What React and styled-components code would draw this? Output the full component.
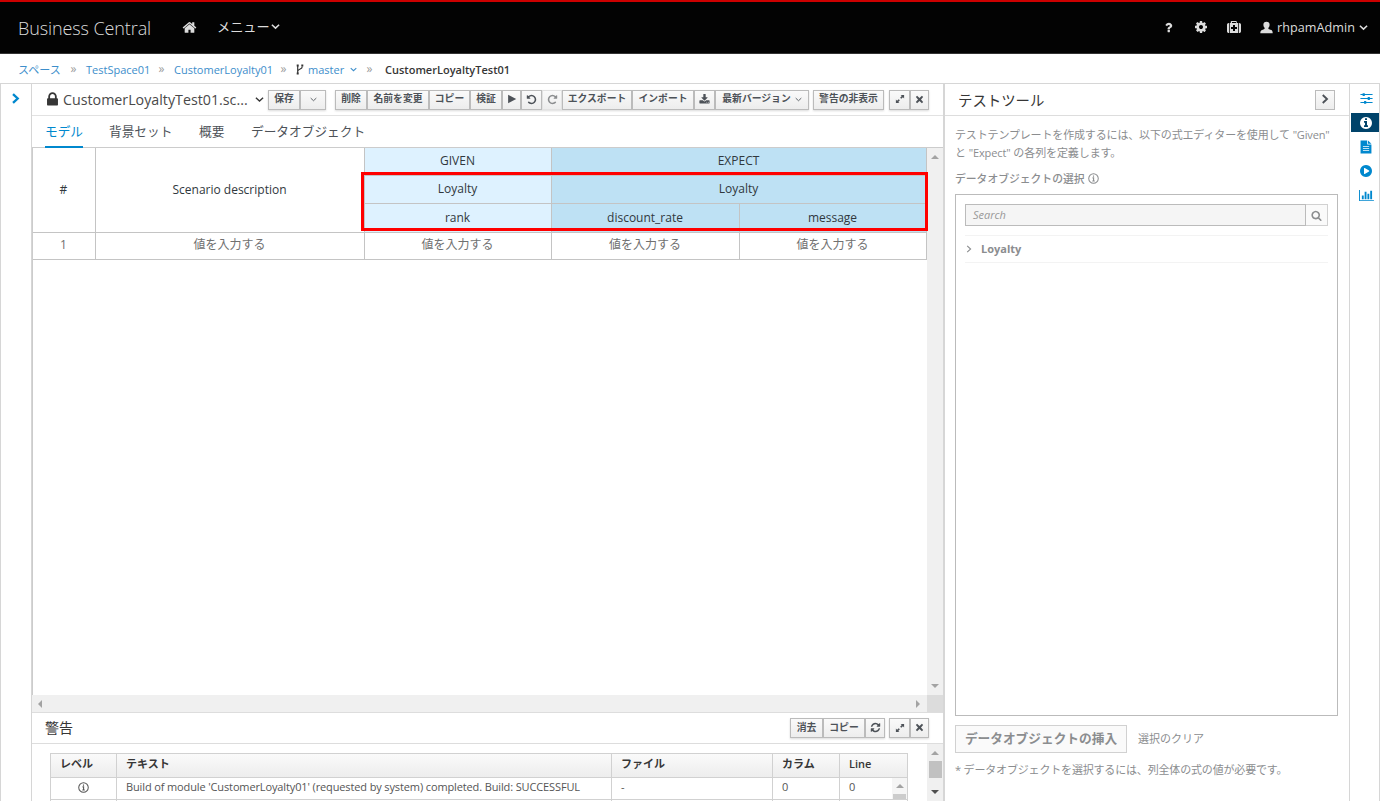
import React from 'react';
import styled, { createGlobalStyle } from "styled-components";

const paths = {
    home: "M1472 992v480q0 26-19 45t-45 19h-384v-384h-256v384h-384q-26 0-45-19t-19-45v-480q0-1 .5-3t.5-3l575-474 575 474q1 2 1 6zm223-69l-62 74q-8 9-21 11h-3q-13 0-21-7l-692-577-692 577q-12 8-24 7-13-2-21-11l-62-74q-8-10-7-23.5t11-21.5l719-599q32-26 76-26t76 26l244 204v-195q0-14 9-23t23-9h192q14 0 23 9t9 23v408l219 182q10 8 11 21.5t-7 23.5z",
    question: "M1088 1256v240q0 16-12 28t-28 12h-240q-16 0-28-12t-12-28v-240q0-16 12-28t28-12h240q16 0 28 12t12 28zm316-600q0 54-15.5 101t-35 76.5-55 59.5-57.5 43.5-61 35.5q-41 23-68.5 65t-27.5 67q0 17-12 32.5t-28 15.5h-240q-15 0-25.5-18.5t-10.5-37.5v-45q0-83 65-156.5t143-108.5q59-27 84-56t25-76q0-42-46.5-74t-107.5-32q-65 0-108 29-35 25-107 115-13 16-31 16-12 0-25-8l-164-125q-13-10-15.5-25t5.5-28q160-266 464-266 80 0 161 31t146 83 106 127.5 41 158.5z",
    cog: "M1152 896q0-106-75-181t-181-75-181 75-75 181 75 181 181 75 181-75 75-181zm512-109v222q0 12-8 23t-20 13l-185 28q-19 54-39 91 35 50 107 138 10 12 10 25t-9 23q-27 37-99 108t-94 71q-12 0-26-9l-138-108q-44 23-91 38-16 136-29 186-7 28-36 28h-222q-14 0-24.5-8.5t-11.5-21.5l-28-184q-49-16-90-37l-141 107q-10 9-25 9-14 0-25-11-126-114-165-168-7-10-7-23 0-12 8-23 15-21 51-66.5t54-70.5q-27-50-41-99l-183-27q-13-2-21-12.5t-8-23.5v-222q0-12 8-23t19-13l186-28q14-46 39-92-40-57-107-138-10-12-10-24 0-10 9-23 26-36 98.5-107.5t94.5-71.5q13 0 26 10l138 107q44-23 91-38 16-136 29-186 7-28 36-28h222q14 0 24.5 8.5t11.5 21.5l28 184q49 16 90 37l142-107q9-9 24-9 13 0 25 10 129 119 165 170 7 8 7 22 0 12-8 23-15 21-51 66.5t-54 70.5q26 50 41 98l183 28q13 2 21 12.5t8 23.5z",
    medkit: "M1280 1120v-192q0-14-9-23t-23-9h-224v-224q0-14-9-23t-23-9h-192q-14 0-23 9t-9 23v224h-224q-14 0-23 9t-9 23v192q0 14 9 23t23 9h224v224q0 14 9 23t23 9h192q14 0 23-9t9-23v-224h224q14 0 23-9t9-23zm-640-736h512v-128h-512v128zm-384 0v1280h-32q-92 0-158-66t-66-158v-832q0-92 66-158t158-66h32zm1184 0v1280h-1088v-1280h128v-160q0-40 28-68t68-28h576q40 0 68 28t28 68v160h128zm352 224v832q0 92-66 158t-158 66h-32v-1280h32q92 0 158 66t66 158z",
    user: "M896 96c-280 0-430 170-430 420 0 160 60 330 170 420v130c-40 110-460 140-550 330-40 90-40 180-40 300h1700c0-120 0-210-40-300-90-190-510-220-550-330v-130c110-90 170-260 170-420 0-250-150-420-430-420z",
    search: "M1216 832q0-185-131.5-316.5t-316.5-131.5-316.5 131.5-131.5 316.5 131.5 316.5 316.5 131.5 316.5-131.5 131.5-316.5zm512 832q0 52-38 90t-90 38q-54 0-90-38l-343-342q-179 124-399 124-143 0-273.5-55.5t-225-150-150-225-55.5-273.5 55.5-273.5 150-225 225-150 273.5-55.5 273.5 55.5 225 150 150 225 55.5 273.5q0 220-124 399l343 343q37 37 37 90z",
    info: "M1152 1376v-160q0-14-9-23t-23-9h-96v-512q0-14-9-23t-23-9h-320q-14 0-23 9t-9 23v160q0 14 9 23t23 9h96v320h-96q-14 0-23 9t-9 23v160q0 14 9 23t23 9h448q14 0 23-9t9-23zm-128-896v-160q0-14-9-23t-23-9h-192q-14 0-23 9t-9 23v160q0 14 9 23t23 9h192q14 0 23-9t9-23zm640 416q0 209-103 385.5t-279.5 279.5-385.5 103-385.5-103-279.5-279.5-103-385.5 103-385.5 279.5-279.5 385.5-103 385.5 103 279.5 279.5 103 385.5z",
    download: "M1344 1344q0-26-19-45t-45-19-45 19-19 45 19 45 45 19 45-19 19-45zm256 0q0-26-19-45t-45-19-45 19-19 45 19 45 45 19 45-19 19-45zm128-224v320q0 40-28 68t-68 28h-1472q-40 0-68-28t-28-68v-320q0-40 28-68t68-28h465l135 136q58 56 136 56t136-56l136-136h464q40 0 68 28t28 68zm-325-569q17 41-14 70l-448 448q-18 19-45 19t-45-19l-448-448q-31-29-14-70 17-39 59-39h256v-448q0-26 19-45t45-19h256q26 0 45 19t19 45v448h256q42 0 59 39z",
    lock: "M640 768h512v-192q0-106-75-181t-181-75-181 75-75 181v192zm832 96v576q0 40-28 68t-68 28h-960q-40 0-68-28t-28-68v-576q0-40 28-68t68-28h32v-192q0-184 132-316t316-132 316 132 132 316v192h32q40 0 68 28t28 68z",
    undo: "M1664 896q0 156-61 298t-164 245-245 164-298 61q-172 0-327-72.5t-264-204.5q-7-10-6.5-22.5t8.5-20.5l137-138q10-9 25-9 16 2 23 12 73 95 179 147t225 52q104 0 198.5-40.5t163.5-109.5 109.5-163.5 40.5-198.5-40.5-198.5-109.5-163.5-163.5-109.5-198.5-40.5q-98 0-188 35.5t-160 101.5l137 138q31 30 14 69-17 40-59 40h-448q-26 0-45-19t-19-45v-448q0-42 40-59 39-17 69 14l130 129q107-101 244.5-156.5t284.5-55.5q156 0 298 61t245 164 164 245 61 298z",
    refresh: "M1639 1056q0 5-1 7-64 268-268 434.5t-478 166.5q-146 0-282.5-55t-243.5-157l-129 129q-19 19-45 19t-45-19-19-45v-448q0-26 19-45t45-19h448q26 0 45 19t19 45-19 45l-137 137q71 66 161 102t187 36q134 0 250-65t186-179q11-17 53-117 8-23 30-23h192q13 0 22.5 9.5t9.5 22.5zm25-800v448q0 26-19 45t-45 19h-448q-26 0-45-19t-19-45 19-45l138-138q-148-137-349-137-134 0-250 65t-186 179q-11 17-53 117-8 23-30 23h-199q-13 0-22.5-9.5t-9.5-22.5v-7q65-268 270-434.5t480-166.5q146 0 284 55.5t245 156.5l130-129q19-19 45-19t45 19 19 45z",
    playCircle: "M896 128q209 0 385.5 103t279.5 279.5 103 385.5-103 385.5-279.5 279.5-385.5 103-385.5-103-279.5-279.5-103-385.5 103-385.5 279.5-279.5 385.5-103zm384 823q32-18 32-55t-32-55l-544-320q-31-19-64-1-32 19-32 56v640q0 37 32 56 16 8 32 8 17 0 32-9z",
    play: "M200 130v1532l1450-766z",
    expand: "M1000 160h632v632l-210-210-290 290-212-212 290-290zM792 1632h-632v-632l210 210 290-290 212 212-290 290z",
    times: "M420 170l476 430 476-430 250 250-430 476 430 476-250 250-476-430-476 430-250-250 430-476-430-476z",
    file: "M200 60h850v520h540v1150h-1390zM1150 60l440 430h-440zM500 760v110h800v-110zM500 1020v110h800v-110zM500 1280v110h800v-110z",
    sliders: "M60 290h300v-130h300v130h1072v140h-1072v130h-300v-130h-300zM60 826h1000v-130h300v130h372v140h-372v130h-300v-130h-1000zM60 1362h500v-130h300v130h872v140h-872v130h-300v-130h-500z",
    chart: "M640 896v512h-256v-512h256zm384-512v1024h-256v-1024h256zm1024 1152v128h-2048v-1536h128v1408h1920zm-640-896v768h-256v-768h256zm384-384v1152h-256v-1152h256z",
}

const Icon = ({name, size = 12, width, flip}) => (
    <Svg width={width || size} height={size} $flip={flip} fill="currentColor" fillRule={name === 'file' ? 'evenodd' : 'nonzero'}
         viewBox={name === 'chart' ? "0 0 2048 1792" : "0 0 1792 1792"}>
        <path d={paths[name]}/>
    </Svg>
)

const Chevron = ({right, size = 8, weight = 1.4}) => (
    <Svg width={size} height={size} viewBox="0 0 8 8" fill="none" stroke="currentColor" strokeWidth={weight}>
        <path d={right ? "M2.2 .8L5.6 4L2.2 7.2" : "M.8 2.4L4 5.4L7.2 2.4"}/>
    </Svg>
)

const InfoOutline = ({size = 11}) => (
    <Svg width={size} height={size} viewBox="0 0 12 12" fill="none" stroke="currentColor">
        <circle cx="6" cy="6" r="5.2" strokeWidth="1.1"/>
        <path d="M6 2.7v1.3M4.9 5.3h1.2v3.4M4.7 8.8h2.7" strokeWidth="1.2"/>
    </Svg>
)

const Branch = () => (
    <Svg width="8" height="11" viewBox="0 0 8 11" fill="none" stroke="currentColor">
        <path d="M1.7 2v7M6.3 2.4c0 3.4-4.6 2.4-4.6 5" strokeWidth="1.2"/>
        <path d="M1.7 .6v2M1.7 8.4v2M6.3 .6v2" strokeWidth="2"/>
    </Svg>
)

const Arrow = ({dir, dark}) => (
    <Svg width="8" height="8" viewBox="0 0 8 8" fill={dark ? "#505050" : "#a3a3a3"}>
        <path d={{up: "M0 6l4-4 4 4z", down: "M0 2l4 4 4-4z", left: "M6 0L2 4l4 4z", right: "M2 0l4 4-4 4z"}[dir]}/>
    </Svg>
)

const toolbar = [
    [{w: 32, text: "保存"}, {w: 26, icon: <Chevron size={7} weight={1}/>}],
    [
        {w: 32, text: "削除"}, {w: 62, text: "名前を変更"}, {w: 41, text: "コピー"}, {w: 32, text: "検証"},
        {w: 19, icon: <Icon name="play" size={10}/>}, {w: 21, icon: <Icon name="undo" size={11}/>},
        {w: 20, icon: <Icon name="undo" flip size={11}/>, disabled: true},
        {w: 70, text: "エクスポート"}, {w: 62, text: "インポート"}, {w: 21, icon: <Icon name="download" size={11}/>},
        {w: 94, text: "最新バージョン", icon: <Chevron size={7} weight={1}/>},
    ],
    [{w: 71, text: "警告の非表示"}],
    [{w: 21, icon: <Icon name="expand" size={10}/>}, {w: 19, icon: <Icon name="times" size={9}/>}],
]
const gaps = [0, 9, 4, 5]

const alertTools = [
    [{w: 33, text: "消去"}, {w: 42, text: "コピー"}, {w: 20, icon: <Icon name="refresh" size={11}/>}],
    toolbar[3],
]

const Buttons = ({groups, spaces}) => groups.map((group, i) => (
    <Group key={i} $gap={spaces[i]}>
        {group.map((b, j) => (
            <Button key={j} $w={b.w} $disabled={b.disabled}>{b.text && <span>{b.text}</span>}{b.icon}</Button>
        ))}
    </Group>
))

const Header = () => (
    <TopBar>
        <Brand>Business Central</Brand>
        <HomeLink><Icon name="home" size={15}/></HomeLink>
        <MenuLink>メニュー<Chevron size={9}/></MenuLink>
        <Tools>
            <Icon name="question" size={13}/>
            <Icon name="cog" size={14}/>
            <Icon name="medkit" size={14}/>
            <UserMenu><Icon name="user" size={13}/><span>rhpamAdmin</span><Chevron size={9}/></UserMenu>
        </Tools>
    </TopBar>
)

const Breadcrumbs = () => (
    <Crumbs>
        <Crumb $w={43}>スペース</Crumb><Sep>»</Sep>
        <Crumb $w={63}>TestSpace01</Crumb><Sep>»</Sep>
        <Crumb $w={97}>CustomerLoyalty01</Crumb><Sep>»</Sep>
        <BranchIcon><Branch/></BranchIcon>
        <Crumb $w={49}>master<Chevron size={7} weight={1.2}/></Crumb><Sep>»</Sep>
        <Current>CustomerLoyaltyTest01</Current>
    </Crumbs>
)

const Grid = () => (
    <ScenarioGrid>
        <Cell $row="1 / 4">#</Cell>
        <Cell $row="1 / 4">Scenario description</Cell>
        <Cell $tone="given">GIVEN</Cell>
        <Cell $tone="expect" $col="4 / 6">EXPECT</Cell>
        <Cell $tone="given">Loyalty</Cell>
        <Cell $tone="expect" $col="4 / 6">Loyalty</Cell>
        <Cell $tone="given">rank</Cell>
        <Cell $tone="expect">discount_rate</Cell>
        <Cell $tone="expect">message</Cell>
        <Cell $muted>1</Cell>
        {[1, 2, 3, 4].map(n => <Cell key={n} $muted>値を入力する</Cell>)}
        <Highlight/>
    </ScenarioGrid>
)

const Alerts = () => (
    <AlertsWrapper>
        <AlertsHeader>
            <AlertsTitle>警告</AlertsTitle>
            <Buttons groups={alertTools} spaces={[0, 4]}/>
        </AlertsHeader>
        <AlertsBody>
            <AlertTable>
                <Th>レベル</Th><Th>テキスト</Th><Th>ファイル</Th><Th>カラム</Th><Th>Line</Th>
                <Td $center><InfoOutline/></Td>
                <Td>Build of module 'CustomerLoyalty01' (requested by system) completed. Build: SUCCESSFUL</Td>
                <Td>-</Td>
                <Td>0</Td>
                <Td $last>0<InnerScroll><Arrow dir="up"/><InnerThumb/></InnerScroll></Td>
                <Td/><Td/><Td/><Td/><Td/>
            </AlertTable>
            <AlertsScroll><Arrow dir="up"/><Thumb/><Arrow dir="down" dark/></AlertsScroll>
        </AlertsBody>
    </AlertsWrapper>
)

const TestTools = () => (
    <Panel>
        <PanelHeader>
            <PanelTitle>テストツール</PanelTitle>
            <Button $w={20}><Chevron right size={10} weight={1.5}/></Button>
        </PanelHeader>
        <PanelBody>
            <Description>
                <Line $ls={-0.15}>テストテンプレートを作成するには、以下の式エディターを使用して "Given"</Line>
                <Line $ls={-0.1}>と "Expect" の各列を定義します。</Line>
            </Description>
            <SelectLabel><span>データオブジェクトの選択</span><InfoOutline/></SelectLabel>
            <Tree>
                <SearchRow>
                    <SearchField>Search</SearchField>
                    <SearchButton><Icon name="search" size={11}/></SearchButton>
                </SearchRow>
                <TreeItem><Chevron right size={8} weight={1.1}/><span>Loyalty</span></TreeItem>
            </Tree>
            <Actions>
                <InsertButton>データオブジェクトの挿入</InsertButton>
                <ClearLink>選択のクリア</ClearLink>
            </Actions>
            <Note>* データオブジェクトを選択するには、列全体の式の値が必要です。</Note>
        </PanelBody>
    </Panel>
)

const App = () => (
    <Page>
        <GlobalStyle/>
        <Header/>
        <Breadcrumbs/>
        <Workbench>
            <LeftDock><Chevron right size={11} weight={1.7}/></LeftDock>
            <Editor>
                <EditorHeader>
                    <LockIcon><Icon name="lock" size={17}/></LockIcon>
                    <FileName>CustomerLoyaltyTest01.sc...</FileName>
                    <FileCaret><Chevron size={9} weight={1.2}/></FileCaret>
                    <Buttons groups={toolbar} spaces={gaps}/>
                </EditorHeader>
                <Tabs>
                    <Tab $w={38} $active>モデル</Tab>
                    <Tab $w={64}>背景セット</Tab>
                    <Tab $w={26}>概要</Tab>
                    <Tab $w={115}>データオブジェクト</Tab>
                </Tabs>
                <Canvas>
                    <CanvasView><Grid/></CanvasView>
                    <VScroll><Arrow dir="up"/><Arrow dir="down"/></VScroll>
                    <HScroll><Arrow dir="left"/><Arrow dir="right"/></HScroll>
                    <ScrollCorner/>
                </Canvas>
                <Alerts/>
            </Editor>
            <TestTools/>
            <RightDock>
                <DockItem><Icon name="sliders" size={13}/></DockItem>
                <DockItem $active><Icon name="info" size={14}/></DockItem>
                <DockItem><Icon name="file" size={14}/></DockItem>
                <DockItem><Icon name="playCircle" size={14}/></DockItem>
                <DockItem><Icon name="chart" size={13} width={15}/></DockItem>
            </RightDock>
        </Workbench>
    </Page>
);

export default App;

const GlobalStyle = createGlobalStyle`
  * {
    box-sizing: border-box;
  }

  body {
    margin: 0;
    overflow: hidden;
    background: #fff;
    color: #363636;
    font-family: "Open Sans", "Noto Sans CJK JP", sans-serif;
    font-size: 11px;
  }
`

const Svg = styled.svg`
  display: block;
  flex: none;
  transform: ${props => props.$flip ? "scaleX(-1)" : "none"};
`

const Page = styled.div`
  width: 1380px;
  height: 801px;
  display: flex;
  flex-direction: column;
  overflow: hidden;
  white-space: nowrap;
`

const TopBar = styled.header`
  flex: none;
  height: 54px;
  display: flex;
  align-items: center;
  padding: 0 12px 1px 18px;
  background: #030303;
  border-top: 2px solid #c00;
  border-bottom: 1px solid #333;
  color: #dcdcdc;
`

const Brand = styled.div`
  width: 164px;
  padding-top: 1px;
  font-size: 18px;
  font-weight: 300;
  letter-spacing: -0.1px;
`

const HomeLink = styled.div`
  width: 35px;
`

const MenuLink = styled.div`
  display: flex;
  align-items: center;
  gap: 1px;
  padding-bottom: 1px;
  font-size: 13.2px;
`

const Tools = styled.div`
  margin-left: auto;
  display: flex;
  align-items: center;
  gap: 19px;
`

const UserMenu = styled.div`
  display: flex;
  align-items: center;
  gap: 4px;
  font-size: 12.6px;
  letter-spacing: 0.05px;
`

const Crumbs = styled.nav`
  flex: none;
  height: 29px;
  display: flex;
  align-items: center;
  padding: 1px 0 0 18px;
  font-size: 11px;
`

const Crumb = styled.span`
  width: ${props => props.$w}px;
  display: flex;
  align-items: center;
  gap: 6px;
  color: #3d8ecb;
`

const Sep = styled.span`
  width: 25px;
  padding-bottom: 1px;
  text-align: center;
  font-size: 12px;
  color: #9c9c9c;
`

const BranchIcon = styled.span`
  width: 12px;
`

const Current = styled.span`
  margin-left: 3px;
  font-weight: 600;
`

const Workbench = styled.div`
  flex: 1;
  min-height: 0;
  display: flex;
  border: solid #d6d6d6;
  border-width: 1px 1px 0 1px;
`

const LeftDock = styled.aside`
  width: 31px;
  padding: 9px 0 0 9px;
  border-right: 1px solid #d6d6d6;
  color: #0088ce;
`

const Editor = styled.main`
  width: 913px;
  display: flex;
  flex-direction: column;
  border-right: 2px solid #d6d6d6;
`

const EditorHeader = styled.div`
  flex: none;
  height: 32px;
  display: flex;
  align-items: center;
  padding-left: 12px;
  border-bottom: 1px solid #e2e2e2;
`

const LockIcon = styled.div`
  width: 19px;
`

const FileName = styled.div`
  width: 192px;
  font-size: 14.25px;
  color: #4a4a4a;
`

const FileCaret = styled.div`
  width: 13px;
`

const Group = styled.div`
  display: flex;
  margin-left: ${props => props.$gap}px;
  box-shadow: 0 1px 2px rgba(0, 0, 0, .15);
`

const Button = styled.button`
  width: ${props => props.$w}px;
  height: 20px;
  display: flex;
  align-items: center;
  justify-content: center;
  gap: 4px;
  padding: 0 0 1px;
  border: 1px solid ${props => props.$disabled ? "#e2e2e2" : "#bbb"};
  background: linear-gradient(#fafafa, #ededed);
  color: ${props => props.$disabled ? "#8b8d8f" : "#4d5258"};
  font-family: inherit;
  font-size: 9.8px;
  font-weight: 700;
  line-height: 16px;
  white-space: nowrap;

  ${Group} & + & {
    border-left: 0;
  }
`

const Tabs = styled.div`
  flex: none;
  height: 32px;
  display: flex;
  gap: 26px;
  padding-left: 13px;
  border-bottom: 1px solid #ccc;
`

const Tab = styled.div`
  width: ${props => props.$w}px;
  height: 32px;
  line-height: 30px;
  font-size: 12.7px;
  color: ${props => props.$active ? "#0088ce" : "#4d5258"};
  border-bottom: 2px solid ${props => props.$active ? "#0088ce" : "transparent"};
`

const Canvas = styled.div`
  flex: none;
  height: 564px;
  display: grid;
  grid-template-columns: 895px 16px;
  grid-template-rows: 547px 17px;
`

const CanvasView = styled.div`
  border-left: 1px solid #ccc;
`

const ScenarioGrid = styled.div`
  position: relative;
  display: grid;
  grid-template-columns: 63px 269px 187px 188px 187px;
  grid-template-rows: 28px 28px 29px 27px;
`

const tones = {given: "#def2ff", expect: "#bee1f4"}

const Cell = styled.div`
  grid-row: ${props => props.$row || "auto"};
  grid-column: ${props => props.$col || "auto"};
  display: flex;
  align-items: center;
  justify-content: center;
  padding: 0 1px ${props => props.$muted ? 3 : 1}px 0;
  border: solid #c4c4c4;
  border-width: 0 1px 1px 0;
  background: ${props => tones[props.$tone] || "#fff"};
  color: ${props => props.$muted ? "#707070" : "#30383d"};
  font-size: 12px;
  line-height: 16px;
`

const Highlight = styled.div`
  position: absolute;
  left: 328px;
  top: 24px;
  width: 567px;
  height: 59px;
  border: 3px solid #f00;
`

const VScroll = styled.div`
  display: flex;
  flex-direction: column;
  align-items: center;
  justify-content: space-between;
  padding: 5px 0;
  background: #f0f0f0;
`

const HScroll = styled.div`
  display: flex;
  align-items: center;
  justify-content: space-between;
  padding: 0 5px 0 4px;
  background: #f0f0f0;
`

const ScrollCorner = styled.div`
  background: #dcdcdc;
`

const AlertsWrapper = styled.section`
  flex: 1;
  min-height: 0;
  display: flex;
  flex-direction: column;
`

const AlertsHeader = styled.div`
  flex: none;
  height: 32px;
  display: flex;
  align-items: center;
  padding-left: 13px;
  border-top: 1px solid #ddd;
  border-bottom: 1px solid #ddd;
`

const AlertsTitle = styled.div`
  width: 745px;
  padding-bottom: 2px;
  font-size: 14px;
`

const AlertsBody = styled.div`
  flex: 1;
  min-height: 0;
  display: flex;
  justify-content: space-between;
  padding-left: 18px;
`

const AlertTable = styled.div`
  width: 858px;
  margin-top: 9px;
  display: grid;
  grid-template-columns: 66px 495px 161px 67px 68px;
  grid-template-rows: 24px 22px 22px;
  border: 1px solid #d1d1d1;
  border-right: 0;
  border-bottom: 0;
`

const Th = styled.div`
  padding-left: 9px;
  border: solid #d1d1d1;
  border-width: 0 1px 1px 0;
  background: linear-gradient(#fafafa, #ededed);
  font-size: 11px;
  font-weight: 600;
  line-height: 20px;
`

const Td = styled.div`
  display: flex;
  align-items: ${props => props.$last ? "flex-start" : "center"};
  justify-content: ${props => props.$center ? "center" : props.$last ? "space-between" : "flex-start"};
  padding: 0 0 ${props => props.$last ? 0 : 3}px ${props => props.$center ? 0 : 9}px;
  border: solid #d1d1d1;
  border-width: 0 1px 1px 0;
  color: #555;
  font-size: 11px;
  line-height: 18px;
  letter-spacing: -0.125px;
`

const InnerScroll = styled.div`
  width: 15px;
  height: 21px;
  display: flex;
  flex-direction: column;
  align-items: center;
  justify-content: space-between;
  padding-top: 4px;
  background: #f5f5f5;
`

const InnerThumb = styled.div`
  width: 13px;
  height: 5px;
  background: #ccc;
`

const AlertsScroll = styled.div`
  width: 16px;
  display: flex;
  flex-direction: column;
  align-items: center;
  padding-top: 5px;
  background: #f0f0f0;
`

const Thumb = styled.div`
  width: 13px;
  height: 17px;
  margin: 4px 0 10px;
  background: #c1c1c1;
`

const Panel = styled.section`
  width: 405px;
  display: flex;
  flex-direction: column;
  border-right: 1px solid #d6d6d6;
`

const PanelHeader = styled.div`
  flex: none;
  height: 32px;
  display: flex;
  align-items: center;
  justify-content: space-between;
  padding: 0 14px 0 13px;
  border-bottom: 1px solid #ddd;
`

const PanelTitle = styled.div`
  font-size: 14.4px;
`

const PanelBody = styled.div`
  padding: 10px 11px 0 10px;
  color: #8b8d8f;
`

const Description = styled.div`
  height: 36px;
`

const Line = styled.div`
  height: 18px;
  font-size: 11px;
  line-height: 18px;
  letter-spacing: ${props => props.$ls || 0}px;
`

const SelectLabel = styled.div`
  height: 16px;
  margin-top: 8px;
  display: flex;
  align-items: center;
  gap: 3px;
  font-size: 10.8px;
  font-weight: 500;
`

const Tree = styled.div`
  height: 522px;
  margin-top: 8px;
  padding: 9px;
  border: 1px solid #bbb;
`

const SearchRow = styled.div`
  height: 22px;
  display: flex;
`

const SearchField = styled.div`
  flex: 1;
  padding-left: 7px;
  border: 1px solid #bbb;
  background: #f5f5f5;
  font-size: 11px;
  font-style: italic;
  line-height: 20px;
  color: #999;
`

const SearchButton = styled.div`
  width: 22px;
  display: flex;
  align-items: center;
  justify-content: center;
  border: 1px solid #d1d1d1;
  border-left: 0;
  background: #fafafa;
`

const TreeItem = styled.div`
  height: 28px;
  margin-top: 9px;
  display: flex;
  align-items: center;
  gap: 8px;
  padding-bottom: 1px;
  border: solid #f3f3f3;
  border-width: 1px 0;
  font-weight: 700;
`

const Actions = styled.div`
  height: 28px;
  margin-top: 9px;
  display: flex;
  align-items: center;
`

const InsertButton = styled.button`
  width: 172px;
  height: 28px;
  padding: 0 0 3px;
  border: 1px solid #d1d1d1;
  background: #fafafa;
  color: #8b8d8f;
  font-family: inherit;
  font-size: 12.7px;
  font-weight: 600;
  line-height: 20px;
  white-space: nowrap;
`

const ClearLink = styled.span`
  margin-left: 11px;
  padding-bottom: 2px;
  font-size: 11px;
`

const Note = styled.div`
  margin-top: 9px;
  font-size: 11px;
  line-height: 16px;
  letter-spacing: -0.17px;
`

const RightDock = styled.aside`
  flex: 1;
  padding: 5px 0 0 1px;
`

const DockItem = styled.div`
  height: 19px;
  margin-bottom: 5.3px;
  padding-left: 2px;
  display: flex;
  align-items: center;
  justify-content: center;
  background: ${props => props.$active ? "#00436a" : "transparent"};
  color: ${props => props.$active ? "#fff" : "#0088ce"};
`
